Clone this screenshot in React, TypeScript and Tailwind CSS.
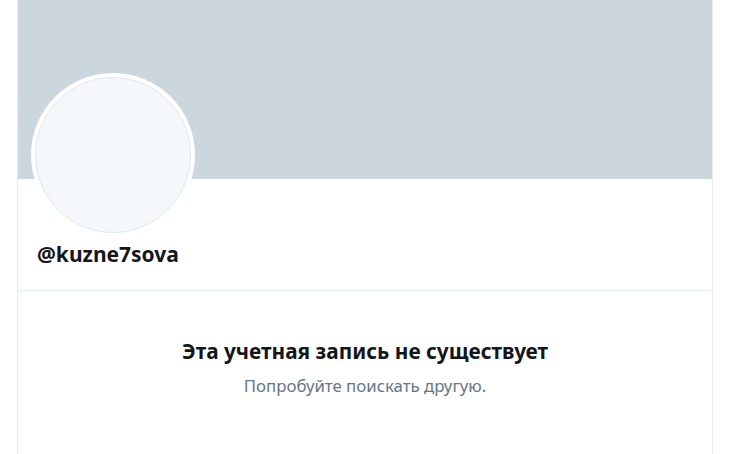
import React from 'react';

export default function App(): JSX.Element {
  return (
    <div className="w-full h-[454px] bg-white overflow-hidden" style={{ fontFamily: '"Noto Sans", "Open Sans", sans-serif' }}>
      <div className="w-[696px] h-full mx-auto border-x border-[#e6ecf0] flex flex-col">
        <div className="h-[179px] bg-[#ccd6dd] shrink-0" />
        <div className="px-[13px]">
          <div className="-mt-[106px] w-[164px] h-[164px] rounded-full bg-white p-[4px]">
            <div className="w-full h-full rounded-full bg-[#f5f8fa] border border-[#e1e8ed]" />
          </div>
        </div>
        <div className="px-[19px] pt-[2px] pb-[21px] border-b border-[#e6ecf0]">
          <div className="text-[21px] leading-[30px] font-bold text-[#14171a]">@kuzne7sova</div>
        </div>
        <div className="flex flex-col items-center pt-[46px]">
          <div className="text-[20.8px] leading-[28px] font-bold text-[#14171a]">Эта учетная запись не существует</div>
          <div className="mt-[10px] text-[16.8px] leading-[22px] text-[#657786]">Попробуйте поискать другую.</div>
        </div>
      </div>
    </div>
  );
}
